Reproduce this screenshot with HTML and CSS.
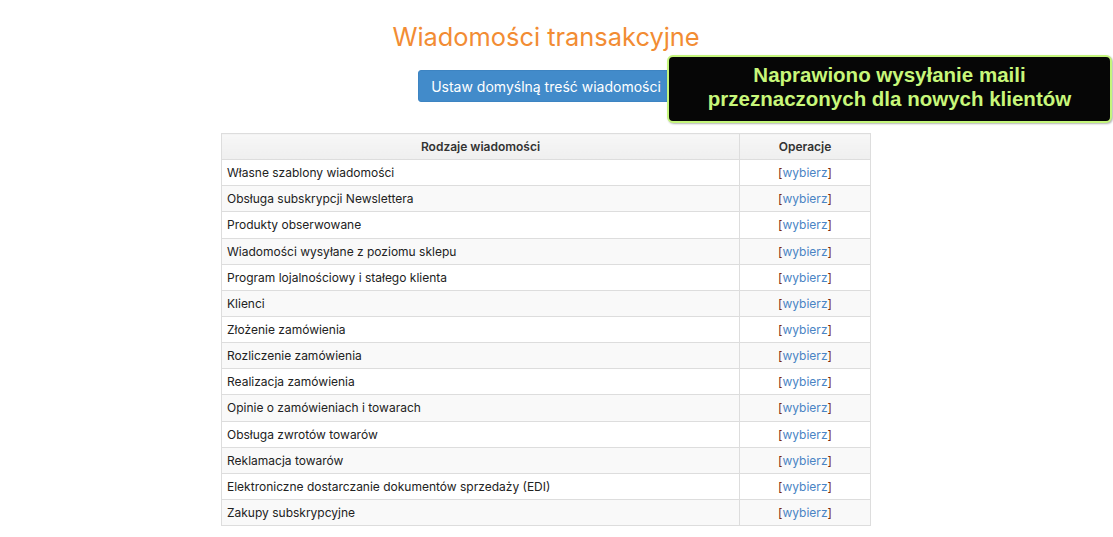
FILE: index.html
```html
<!DOCTYPE html>
<html lang="pl">
<head>
<meta charset="utf-8">
<link rel="stylesheet" href="styles.css">
</head>
<body>
<div class="page">
  <h1 class="title">Wiadomości transakcyjne</h1>
  <div class="actions">
    <button class="btn">Ustaw domyślną treść wiadomości</button>
  </div>
  <table class="grid">
    <thead>
      <tr><th class="c-name">Rodzaje wiadomości</th><th class="c-op">Operacje</th></tr>
    </thead>
    <tbody>
      <tr><td>Własne szablony wiadomości</td><td class="op"><span class="br">[</span><a>wybierz</a><span class="br">]</span></td></tr>
      <tr><td>Obsługa subskrypcji Newslettera</td><td class="op"><span class="br">[</span><a>wybierz</a><span class="br">]</span></td></tr>
      <tr><td>Produkty obserwowane</td><td class="op"><span class="br">[</span><a>wybierz</a><span class="br">]</span></td></tr>
      <tr><td>Wiadomości wysyłane z poziomu sklepu</td><td class="op"><span class="br">[</span><a>wybierz</a><span class="br">]</span></td></tr>
      <tr><td>Program lojalnościowy i stałego klienta</td><td class="op"><span class="br">[</span><a>wybierz</a><span class="br">]</span></td></tr>
      <tr><td>Klienci</td><td class="op"><span class="br">[</span><a>wybierz</a><span class="br">]</span></td></tr>
      <tr><td>Złożenie zamówienia</td><td class="op"><span class="br">[</span><a>wybierz</a><span class="br">]</span></td></tr>
      <tr><td>Rozliczenie zamówienia</td><td class="op"><span class="br">[</span><a>wybierz</a><span class="br">]</span></td></tr>
      <tr><td>Realizacja zamówienia</td><td class="op"><span class="br">[</span><a>wybierz</a><span class="br">]</span></td></tr>
      <tr><td>Opinie o zamówieniach i towarach</td><td class="op"><span class="br">[</span><a>wybierz</a><span class="br">]</span></td></tr>
      <tr><td>Obsługa zwrotów towarów</td><td class="op"><span class="br">[</span><a>wybierz</a><span class="br">]</span></td></tr>
      <tr><td>Reklamacja towarów</td><td class="op"><span class="br">[</span><a>wybierz</a><span class="br">]</span></td></tr>
      <tr><td>Elektroniczne dostarczanie dokumentów sprzedaży (EDI)</td><td class="op"><span class="br">[</span><a>wybierz</a><span class="br">]</span></td></tr>
      <tr><td>Zakupy subskrypcyjne</td><td class="op"><span class="br">[</span><a>wybierz</a><span class="br">]</span></td></tr>
    </tbody>
  </table>
</div>
<div class="callout">Naprawiono wysyłanie maili<br>przeznaczonych dla nowych klientów</div>
</body>
</html>
```

FILE: styles.css
```css
html, body {
  margin: 0;
  padding: 0;
  background: #fff;
}
body {
  font-family: Inter, "Noto Sans", sans-serif;
  color: #222;
  position: relative;
  width: 1113px;
  height: 537px;
  overflow: hidden;
}
.page {
  width: 1092px;
  display: flex;
  flex-direction: column;
  align-items: center;
  padding-top: 21px;
}
.title {
  margin: 0;
  font-size: 25.4px;
  font-weight: 400;
  color: #f28c33;
  line-height: 32px;
}
.actions {
  margin-top: 17px;
}
.btn {
  font-family: Inter, "Noto Sans", sans-serif;
  font-size: 14px;
  color: #fff;
  background: #428bca;
  border: 1px solid #3d84c2;
  border-radius: 3px;
  height: 32px;
  padding: 0 12px;
  white-space: nowrap;
}
.grid {
  margin-top: 31px;
  width: 650px;
  border-collapse: collapse;
  font-size: 12px;
}
.grid th, .grid td {
  border: 1px solid #dddddd;
  height: 25.15px;
  padding: 0 5px;
}
.grid th {
  background: linear-gradient(#f7f7f7, #efefef);
  font-weight: 600;
  color: #333;
  text-align: center;
}
.grid td {
  text-align: left;
}
.grid .c-op {
  width: 120px;
}
.grid tbody tr:nth-child(even) td {
  background: #f9f9f9;
}
.grid td.op {
  text-align: center;
}
.br {
  color: #7a2a14;
}
.op a {
  color: #4a84c4;
}
.callout {
  position: absolute;
  left: 667px;
  top: 55px;
  width: 441px;
  box-sizing: content-box;
  background: #060606;
  border: 2px solid #c4f57c;
  border-radius: 6px;
  box-shadow: 1px 1px 2px rgba(0,0,0,0.3);
  color: #c8f77a;
  font-family: "Liberation Sans", Arial, sans-serif;
  font-weight: 700;
  font-size: 20.5px;
  line-height: 24px;
  text-align: center;
  display: flex;
  align-items: center;
  justify-content: center;
  padding-bottom: 4px;
  height: 60px;
}
```
